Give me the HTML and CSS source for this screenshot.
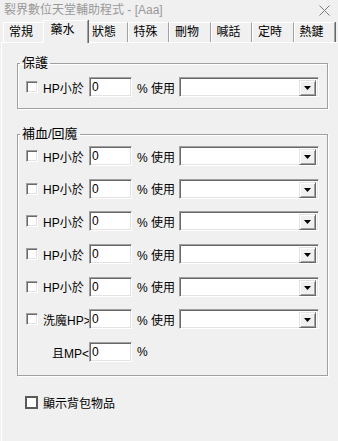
FILE: index.html
```html
<!DOCTYPE html>
<html lang="zh-Hant">
<head>
  <meta charset="UTF-8">
  <title>裂界數位天堂輔助程式</title>
  <link rel="stylesheet" href="styles.css">
</head>
<body>
  <div class="titlebar">
    <span class="title">裂界數位天堂輔助程式 - [Aaa]</span>
    <svg class="close" width="11" height="11" viewBox="0 0 11 11">
      <path d="M0.5 0.5 L10.5 10.5 M10.5 0.5 L0.5 10.5" stroke="#7a7a7a" stroke-width="1" fill="none"/>
    </svg>
  </div>

  <div class="tabs">
    <div class="tab">常規</div>
    <div class="tab active">藥水</div>
    <div class="tab">狀態</div>
    <div class="tab">特殊</div>
    <div class="tab">刪物</div>
    <div class="tab">喊話</div>
    <div class="tab">定時</div>
    <div class="tab">熱鍵</div>
  </div>

  <div class="panel">
    <!-- 保護 -->
    <fieldset class="group">
      <legend>保護</legend>
      <div class="rows protect">
        <div class="row">
          <span class="check"></span>
          <span class="label">HP小於</span>
          <input class="num" value="0">
          <span class="pct">% 使用</span>
          <div class="combo"><span class="combo-btn"><svg width="7" height="4"><polygon points="0,0 7,0 3.5,4"/></svg></span></div>
        </div>
      </div>
    </fieldset>

    <!-- 補血/回魔 -->
    <fieldset class="group">
      <legend>補血/回魔</legend>
      <div class="rows heal">
        <div class="row">
          <span class="check"></span>
          <span class="label">HP小於</span>
          <input class="num" value="0">
          <span class="pct">% 使用</span>
          <div class="combo"><span class="combo-btn"><svg width="7" height="4"><polygon points="0,0 7,0 3.5,4"/></svg></span></div>
        </div>
        <div class="row">
          <span class="check"></span>
          <span class="label">HP小於</span>
          <input class="num" value="0">
          <span class="pct">% 使用</span>
          <div class="combo"><span class="combo-btn"><svg width="7" height="4"><polygon points="0,0 7,0 3.5,4"/></svg></span></div>
        </div>
        <div class="row">
          <span class="check"></span>
          <span class="label">HP小於</span>
          <input class="num" value="0">
          <span class="pct">% 使用</span>
          <div class="combo"><span class="combo-btn"><svg width="7" height="4"><polygon points="0,0 7,0 3.5,4"/></svg></span></div>
        </div>
        <div class="row">
          <span class="check"></span>
          <span class="label">HP小於</span>
          <input class="num" value="0">
          <span class="pct">% 使用</span>
          <div class="combo"><span class="combo-btn"><svg width="7" height="4"><polygon points="0,0 7,0 3.5,4"/></svg></span></div>
        </div>
        <div class="row">
          <span class="check"></span>
          <span class="label">HP小於</span>
          <input class="num" value="0">
          <span class="pct">% 使用</span>
          <div class="combo"><span class="combo-btn"><svg width="7" height="4"><polygon points="0,0 7,0 3.5,4"/></svg></span></div>
        </div>
        <div class="row">
          <span class="check"></span>
          <span class="label">洗魔HP&gt;</span>
          <input class="num" value="0">
          <span class="pct">% 使用</span>
          <div class="combo"><span class="combo-btn"><svg width="7" height="4"><polygon points="0,0 7,0 3.5,4"/></svg></span></div>
        </div>
        <div class="row">
          <span class="label mp">且MP&lt;</span>
          <input class="num" value="0">
          <span class="pct">%</span>
        </div>
      </div>
    </fieldset>

    <label class="show-bag"><span class="flat-box"></span>顯示背包物品</label>
  </div>
</body>
</html>
```

FILE: styles.css
```css
body {
  margin: 0;
  height: 100vh;
  display: flex;
  flex-direction: column;
  background: #f0f0f0;
  font-family: "Liberation Sans", "Noto Sans CJK TC", sans-serif;
  font-size: 12px;
  color: #000;
  overflow: hidden;
}
/* Title bar */
.titlebar {
  height: 20px;
  flex: 0 0 20px;
  display: flex;
  align-items: center;
  justify-content: space-between;
  padding: 0 8px 0 4px;
}
.title {
  color: #999;
  line-height: 16px;
}
/* Tab strip */
.tabs {
  display: flex;
  align-items: flex-start;
  height: 23px;
  flex: 0 0 23px;
  margin-bottom: -1px;
  padding-left: 3px;
}
.tab {
  flex: 0 0 41.5px;
  box-sizing: border-box;
  height: 20px;
  margin-top: 2px;
  padding-left: 5px;
  line-height: 18px;
  border-top: 1px solid #fff;
  border-left: 1px solid #fff;
  border-right: 1px solid #a0a0a0;
  box-shadow: 1px 0 0 #696969;
  white-space: nowrap;
}
.tab.active {
  flex-basis: 45.5px;
  height: 23px;
  margin: 0 -2px;
  padding-left: 7px;
  line-height: 19px;
  background: #f0f0f0;
  position: relative;
  z-index: 1;
}
/* Tab page */
.panel {
  flex: 1;
  margin-left: 1px;
  padding-top: 12px;
  border-top: 1px solid #fff;
  border-left: 1px solid #fff;
}
/* Group boxes */
.group {
  margin: 0 10px 17px 15px;
  padding: 0;
  border: 1px solid #a0a0a0;
  box-shadow: inset 1px 1px 0 #fff, 1px 1px 0 #fff;
}
.group legend {
  margin-left: 2px;
  padding: 0 2px;
  font-size: 13px;
  line-height: 16px;
}
.rows {
  display: flex;
  flex-direction: column;
  padding-left: 8px;
}
.rows.protect { padding-top: 6px; padding-bottom: 11px; }
.rows.heal {
  gap: 12.7px;
  padding-top: 4px;
  padding-bottom: 12.5px;
}
.row {
  display: flex;
  align-items: center;
  height: 20px;
}
.check {
  width: 12px;
  height: 12px;
  box-sizing: border-box;
  background: #fff;
  border: 1px solid;
  border-color: #a0a0a0 #fff #fff #a0a0a0;
  box-shadow: inset 1px 1px 0 #696969, inset -1px -1px 0 #e3e3e3;
}
.label {
  width: 46px;
  margin-left: 5px;
  white-space: nowrap;
}
.label.mp {
  width: 63px;
  margin-left: 0;
  text-align: right;
}
.num {
  width: 43px;
  height: 20px;
  box-sizing: border-box;
  margin: 0;
  padding: 0 0 0 2px;
  font: 12px "Liberation Sans", sans-serif;
  background: #fff;
  border: 1px solid;
  border-color: #a0a0a0 #fff #fff #a0a0a0;
  box-shadow: inset 1px 1px 0 #696969, inset -1px -1px 0 #e3e3e3;
  outline: none;
}
.pct {
  width: 42px;
  margin-left: 5px;
  white-space: nowrap;
}
/* Combo box */
.combo {
  width: 140px;
  height: 20px;
  box-sizing: border-box;
  padding: 2px;
  display: flex;
  justify-content: flex-end;
  background: #fff;
  border: 1px solid;
  border-color: #a0a0a0 #fff #fff #a0a0a0;
  box-shadow: inset 1px 1px 0 #696969, inset -1px -1px 0 #e3e3e3;
}
.combo-btn {
  width: 17px;
  height: 16px;
  box-sizing: border-box;
  display: flex;
  align-items: center;
  justify-content: center;
  background: #f0f0f0;
  border: 1px solid;
  border-color: #e3e3e3 #696969 #696969 #e3e3e3;
  box-shadow: inset 1px 1px 0 #fff, inset -1px -1px 0 #a0a0a0;
}
.combo-btn svg { fill: #000; }
/* Bottom checkbox */
.show-bag {
  display: flex;
  align-items: center;
  height: 20px;
  margin: 11px 0 0 23px;
}
.flat-box {
  width: 13px;
  height: 13px;
  box-sizing: border-box;
  margin-right: 5px;
  background: #fff;
  border: 2px solid #5a5a5a;
}
```
